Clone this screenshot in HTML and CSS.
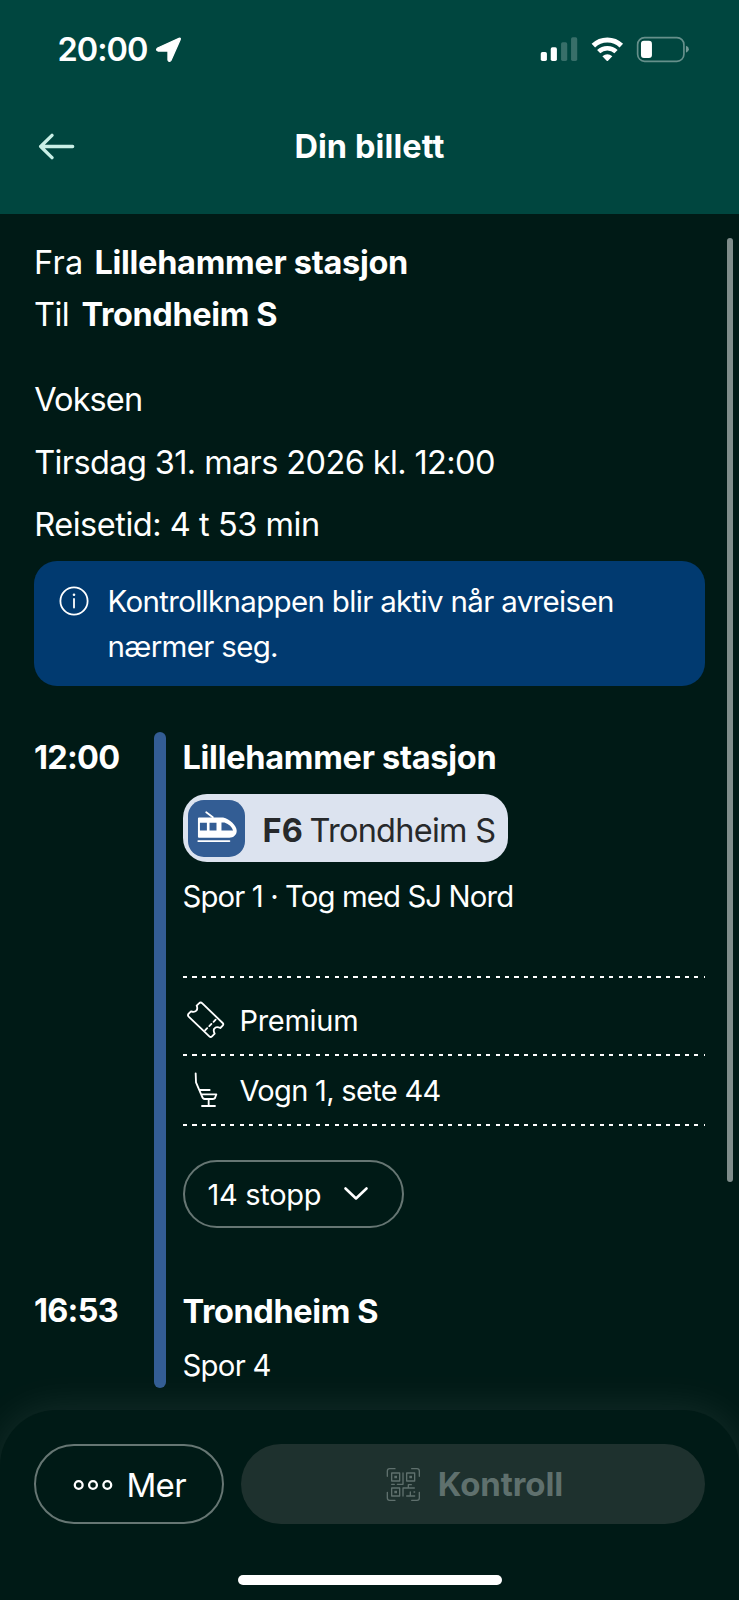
FILE: index.html
```
<!DOCTYPE html>
<html lang="no">
<head>
<meta charset="utf-8">
<title>Din billett</title>
<link rel="stylesheet" href="styles.css">
</head>
<body>
<div class="screen">
  <header class="header">
    <div class="status">
      <span class="clock">20:00</span>
      <svg class="location" viewBox="465 108 81 81"><path d="M537 115 Q543 113 540 120 L513 181 Q507 188 504 180 V153 H474 Q466 150 473 144Z" fill="#fff" stroke="#fff" stroke-width="4" stroke-linejoin="round"/></svg>
      <svg class="indicators" viewBox="510 105 456 85">
        <g fill="#fff"><rect x="515" y="156" width="18.500" height="27" rx="5"/><rect x="545" y="142" width="18.500" height="41" rx="5"/><g opacity=".22"><rect x="576" y="127" width="18.500" height="56" rx="5"/><rect x="606" y="112" width="18.500" height="71" rx="5"/></g></g>
        <g fill="none" stroke="#fff"><path stroke-width="15" d="M673 137 A60 60 0 0 1 757 137"/><path stroke-width="14" d="M689 155 A38 38 0 0 1 741 155"/></g>
        <path fill="#fff" d="M700 169 Q715 156 730 169 L717 182 Q715 184 713 182Z"/>
        <rect x="806" y="113" width="139" height="71" rx="21" fill="none" stroke="#fff" stroke-opacity=".4" stroke-width="5"/>
        <path d="M951 137 Q960 140 960 147.500 Q960 155 951 158Z" fill="#fff" opacity=".45"/>
        <rect x="816" y="122" width="33" height="52" rx="9" fill="#fff"/>
      </svg>
    </div>
    <div class="titlebar">
      <svg class="back" viewBox="115 398 111 81"><path d="M219 438.500 H123 M157 405 L123 438.500 L157 472" fill="none" stroke="#c9efe6" stroke-width="10" stroke-linecap="round" stroke-linejoin="round"/></svg>
      <h1 class="title">Din billett</h1>
    </div>
  </header>

  <main class="content">
    <div class="route">
      <p class="route-line"><span class="from">Fra</span><strong class="place">Lillehammer stasjon</strong></p>
      <p class="route-line"><span class="to">Til</span><strong class="place short">Trondheim S</strong></p>
    </div>
    <div class="details">
      <p class="passenger">Voksen</p>
      <p class="date">Tirsdag 31. mars 2026 kl. 12:00</p>
      <p class="duration">Reisetid: 4 t 53 min</p>
    </div>
    <div class="notice">
      <svg class="info" viewBox="0 0 30 30"><g fill="none" stroke="#fff" stroke-width="1.800"><circle cx="15" cy="15" r="13.600"/><path d="M15 13 V21.500" stroke-linecap="round"/></g><circle cx="15" cy="8.800" r="1.300" fill="#fff"/></svg>
      <p class="notice-text">Kontrollknappen blir aktiv når avreisen nærmer seg.</p>
    </div>

    <section class="journey">
      <div class="times"><span class="time">12:00</span><span class="time">16:53</span></div>
      <div class="track"></div>
      <div class="leg">
        <h2 class="stop">Lillehammer stasjon</h2>
        <div class="line-badge">
          <svg class="train" viewBox="24 29 172 172"><rect x="24" y="29" width="172" height="172" rx="48" fill="#335d94"/><path fill="#fff" fill-rule="evenodd" d="M57 82 H130 C150 87 171 106 171 122 C171 135 161 143 149 143 H57 Q54 143 54 140 V85 Q54 82 57 82Z M60 98 H81 V121 H60Z M89 98 H110 V121 H89Z M125 97 H134 C148 102 157 111 160 121 H125Z"/><path d="M79 66 L99 81 M55 153 H149" stroke="#fff" stroke-width="5.500" stroke-linecap="round"/></svg>
          <span class="line-name"><b>F6</b><span class="dest">Trondheim S</span></span>
        </div>
        <p class="platform">Spor 1 · Tog med SJ Nord</p>
        <ul class="facts">
          <li class="fact first">
            <svg class="fact-icon" viewBox="15 15 120 120"><g fill="none" stroke="#fff" stroke-width="5.500" stroke-linejoin="round" stroke-linecap="round"><path d="M57 25 Q62 20 67 25 L128 84 Q132 88 128 92 L121 99 Q108 93 103 101 Q99 106 104 116 L96 124 Q92 128 88 124 L26 65 Q22 61 26 56 L33 49 Q43 53 49 47 Q54 41 50 32Z"/><path stroke-dasharray="9 9" d="M107 74 L74 107"/></g></svg>
            <span class="comfort">Premium</span>
          </li>
          <li class="fact">
            <svg class="fact-icon" viewBox="15 225 120 120"><path d="M47 235 L48 262 L66 304 Q68 312 74 312 H98 Q105 312 106 306 L109 298 H64 M58 285 H89 M86 312 V332 M66 333 H105" fill="none" stroke="#fff" stroke-width="5.500" stroke-linejoin="round" stroke-linecap="round"/></svg>
            <span class="seat">Vogn 1, sete 44</span>
          </li>
        </ul>
        <button class="stops">14 stopp<svg class="chevron" viewBox="0 0 26 16"><path d="M2.500 2.500 L13 12.500 L23.500 2.500" fill="none" stroke="#fff" stroke-width="2.600" stroke-linecap="round" stroke-linejoin="round"/></svg></button>
        <h2 class="stop arrival">Trondheim S</h2>
        <p class="platform last">Spor 4</p>
      </div>
    </section>
  </main>

  <footer class="sheet">
    <div class="actions">
      <button class="more"><svg class="dots" viewBox="0 0 40 12"><g fill="none" stroke="#fff" stroke-width="2.300"><circle cx="5.700" cy="6" r="3.900"/><circle cx="20" cy="6" r="3.900"/><circle cx="34.300" cy="6" r="3.900"/></g></svg>Mer</button>
      <button class="control">
        <svg class="qr" viewBox="54 290 105 105"><g fill="none" stroke="#5f706d" stroke-width="4" stroke-linecap="round" stroke-linejoin="round"><path d="M58 318 V302 Q58 295 65 295 H81 M131 295 H147 Q154 295 154 302 V318 M154 366 V383 Q154 390 147 390 H131 M81 390 H65 Q58 390 58 383 V366"/><path d="M71 308 H95 V332 H71Z M116 308 H140 V332 H116Z M71 353 H95 V377 H71Z M105 308 V342 H88 M71 342 H79 M105 377 V353 H139 M121 352 V343 H130 M116 377 H140 M127 376 V365 M138 365 H140"/></g><path fill="#5f706d" d="M79 316h8v8h-8z M124 316h8v8h-8z M79 361h8v8h-8z"/></svg>
        Kontroll
      </button>
    </div>
    <div class="home"></div>
  </footer>
  <div class="scrollbar"></div>
</div>
</body>
</html>
```
FILE: styles.css
```
* { box-sizing: border-box; margin: 0; padding: 0; }
body { background: #001a16; color: #fff; font-family: "Inter", "Liberation Sans", sans-serif; }
button { background: none; border: 0; color: inherit; font: inherit; }
svg { display: block; flex: none; }

.screen { position: relative; width: 739px; height: 1600px; overflow: hidden; display: flex; flex-direction: column; font-size: 32.5px; }

.header { flex: none; height: 214px; background: #00463f; }
.status { height: 98px; padding: 0 47.700px 0 57.5px; display: flex; align-items: center; }
.clock { font-weight: 600; letter-spacing: -1px; width: 97.5px; }
.location { width: 27px; height: 27px; }
.indicators { width: 152px; height: 28.300px; margin-left: auto; }
.titlebar { height: 95px; padding: 0 38.300px; display: flex; align-items: center; }
.back { width: 37px; height: 27px; margin-top: 2px; }
.title { flex: 1; text-align: center; margin: 1px 37px 0 0; font-size: 32.5px; font-weight: 650; letter-spacing: 0.1px; }

.content { flex: 1; padding: 23px 34px 0; }
.route-line { height: 51.5px; display: flex; align-items: center; }
.route-line:first-child .from { width: 60.5px; letter-spacing: 0.3px; }
.to { width: 47.5px; letter-spacing: -0.5px; }
.place { font-weight: 650; letter-spacing: -0.3px; }
.place.short { letter-spacing: -0.4px; }
.details { margin-top: 40px; display: flex; flex-direction: column; gap: 22.7px; line-height: 40px; padding-left: 0.2px; }
.passenger { letter-spacing: -0.9px; }
.date { letter-spacing: -0.61px; }
.duration { letter-spacing: -0.46px; }

.notice { margin-top: 15.600px; height: 125px; padding: 18px 25px; border-radius: 23px; background: #013a70; display: flex; }
.info { width: 30px; height: 30px; margin-top: 7.5px; }
.notice-text { margin-left: 18.5px; font-size: 29.5px; line-height: 45px; letter-spacing: -0.68px; width: 540px; }

.journey { margin-top: 46px; height: 656px; display: grid; grid-template-columns: 120px 12px 1fr; }
.times { display: flex; flex-direction: column; justify-content: space-between; padding: 5px 0 55.5px; }
.time { font-weight: 650; line-height: 42px; letter-spacing: -0.75px; }
.track { border-radius: 6px; background: #335d94; }
.leg { padding: 5px 0 0 16.500px; display: flex; flex-direction: column; align-items: flex-start; }
.stop { font-size: 32.5px; line-height: 42px; font-weight: 650; letter-spacing: -0.28px; }
.line-badge { margin-top: 15.5px; width: 325px; height: 68px; border-radius: 24px; background: #dce3ef; color: #27292b; display: flex; align-items: center; padding-left: 5.5px; }
.train { width: 57px; height: 57px; }
.line-name { display: flex; gap: 6.500px; margin: 5px 0 0 17.5px; }
.line-name b { font-weight: 700; letter-spacing: 0.2px; }
.dest { letter-spacing: -0.75px; }
.platform { margin-top: 15px; font-size: 29.3px; line-height: 40px; letter-spacing: -0.87px; }
.facts { list-style: none; width: 100%; margin-top: 58.5px; background: repeating-linear-gradient(90deg, #fff 0 4.1px, transparent 4.1px 9.47px) 0 0 / 100% 2px no-repeat; }
.fact { height: 70px; display: flex; align-items: center; font-size: 29px; padding: 0 0 2px 2.500px; background: repeating-linear-gradient(90deg, #fff 0 4.1px, transparent 4.1px 9.47px) 0 100% / 100% 2px no-repeat; }
.fact.first { height: 80px; padding-top: 10px; }
.fact-icon { width: 40px; height: 40px; margin-right: 14.500px; }
.comfort, .seat { padding-top: 2px; }
.comfort { letter-spacing: -0.3px; }
.seat { letter-spacing: -0.68px; }
.stops { margin-top: 34px; width: 221px; height: 68px; border: 2px solid #667673; border-radius: 34px; padding: 2px 0 0 23px; display: flex; align-items: center; font-size: 29px; letter-spacing: -0.3px; }
.chevron { width: 26px; height: 16px; margin: 0 0 1px 22px; }
.arrival { margin-top: 63px; letter-spacing: -0.4px; }
.platform.last { margin-top: 13.5px; letter-spacing: -0.7px; }

.sheet { position: relative; flex: none; height: 190px; padding: 34px 34px 15px; border-radius: 56px 56px 0 0; background: #001a16; box-shadow: 0 0 40px rgba(255, 255, 255, 0.09); display: flex; flex-direction: column; justify-content: space-between; }
.actions { display: flex; gap: 17px; height: 80px; font-size: 33px; }
.more { width: 190px; border: 2px solid #667673; border-radius: 40px; display: flex; align-items: center; padding: 1px 0 0 37px; letter-spacing: -0.7px; }
.dots { width: 40px; height: 12px; margin-right: 13.500px; }
.control { flex: 1; border-radius: 40px; background: #1e312e; color: #5f706d; font-weight: 700; display: flex; align-items: center; justify-content: center; gap: 16.500px; padding-left: 3.5px; letter-spacing: -0.1px; }
.qr { width: 35px; height: 35px; }
.home { align-self: center; width: 264px; height: 10px; border-radius: 5px; background: #fff; }
.scrollbar { position: absolute; right: 5.700px; top: 238px; width: 6px; height: 944px; border-radius: 3px; background: #7f8d8b; }
```
